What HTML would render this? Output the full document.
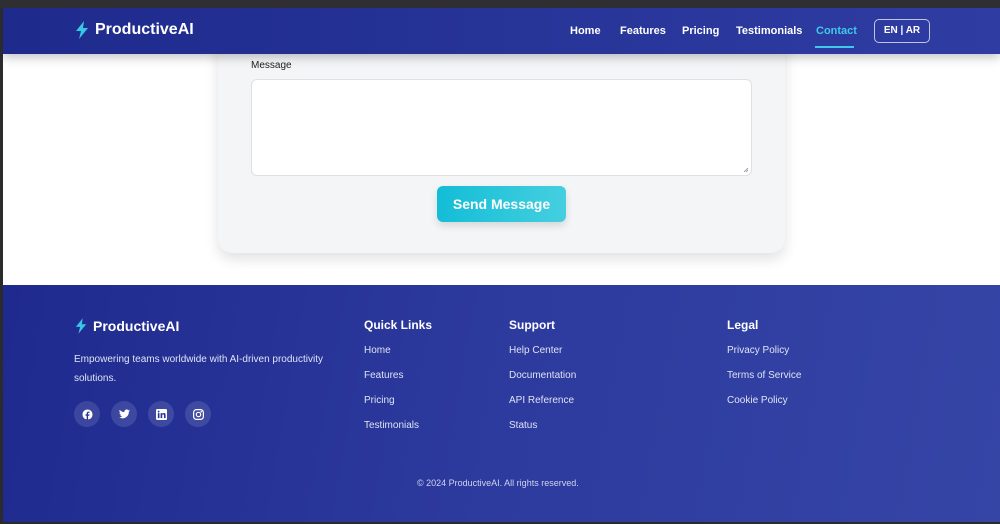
<!DOCTYPE html>
<html><head><meta charset="utf-8"><style>
*{margin:0;padding:0;box-sizing:border-box}
body{width:1000px;height:524px;overflow:hidden;background:#2b2b2e;font-family:"Liberation Sans",sans-serif;position:relative}
.top{position:absolute;left:0;top:0;width:1000px;height:8px;background:#2f2f33}
.page{position:absolute;left:3px;top:8px;width:997px;height:514px;background:#fff;overflow:hidden}
nav{position:absolute;left:0;top:0;width:100%;height:46px;background:linear-gradient(90deg,#1e2a8c,#2f3da3);box-shadow:0 3px 10px rgba(0,0,0,.25);z-index:2}
.logo{position:absolute;left:72px;top:13px;color:#fff;font-weight:bold;font-size:16px;display:flex;align-items:center;gap:6px}
.links{position:absolute;top:17px;left:0;font-size:11px;color:#fff;font-weight:bold}
.links span{position:absolute;white-space:nowrap}
.lang{position:absolute;left:871px;top:11px;width:56px;height:24px;border:1px solid rgba(255,255,255,.7);border-radius:5px;color:#fff;font-size:10px;font-weight:bold;text-align:center;line-height:22px}
.card{position:absolute;left:215px;top:20px;width:567px;height:225px;background:#f4f5f7;border-radius:14px;box-shadow:0 6px 14px rgba(0,0,0,.12)}
.lbl{position:absolute;left:248px;top:52px;font-size:10px;color:#222}
.ta{position:absolute;left:248px;top:71px;width:501px;height:97px;background:#fff;border:1px solid #dde0e4;border-radius:6px}
.btn{position:absolute;left:434px;top:178px;width:129px;height:36px;border-radius:6px;background:linear-gradient(90deg,#13bdd6,#45cfe0);color:#fff;font-size:14px;font-weight:bold;text-align:center;line-height:36px;box-shadow:0 4px 8px rgba(0,0,0,.12)}
footer{position:absolute;left:0;top:277px;width:100%;height:237px;background:linear-gradient(100deg,#1f2a8e,#2d3a9e 50%,#3545a6)}
.f{position:absolute;color:#dfe3f5;font-size:10px;white-space:nowrap}
.h{color:#fff;font-weight:bold;font-size:12px}
.soc{position:absolute;top:116px;width:26px;height:26px;border-radius:50%;background:rgba(255,255,255,.12);display:flex;align-items:center;justify-content:center}
</style></head><body>
<div class="top"></div>
<div class="page">
<div class="card"></div>
<div class="lbl">Message</div>
<div class="ta"><svg style="position:absolute;right:2px;bottom:2px" width="6" height="6"><path d="M1 5L5 1M3 5L5 3" stroke="#888" stroke-width=".8"/></svg></div>
<div class="btn">Send Message</div>
<nav>
<div class="logo"><svg width="14" height="18" viewBox="0 0 14 18"><path d="M9 0L1 10h5l-2 8 9-11H8z" fill="#38c6e6"/></svg>ProductiveAI</div>
<div class="links">
<span style="left:567px">Home</span><span style="left:617px">Features</span><span style="left:679px">Pricing</span><span style="left:733px">Testimonials</span><span style="left:813px;color:#3fc8ea">Contact</span>
<span style="left:812px;top:21px;width:39px;height:2px;background:#3fc8ea"></span>
</div>
<div class="lang">EN | AR</div>
</nav>
<footer>
<div class="logo" style="top:33px;left:72px;font-size:14px"><svg width="12" height="16" viewBox="0 0 14 18"><path d="M9 0L1 10h5l-2 8 9-11H8z" fill="#38c6e6"/></svg>ProductiveAI</div>
<div class="f" style="left:71px;top:65px;line-height:19px;white-space:normal;width:280px">Empowering teams worldwide with AI-driven productivity solutions.</div>
<div class="soc" style="left:71px"><svg width="11" height="11" viewBox="0 0 12 12"><circle cx="6" cy="6" r="5.5" fill="#fff"/><path d="M6.6 12V7.3h1.4l.2-1.5H6.6V4.9c0-.4.2-.7.7-.7h.9V2.9H7c-1.2 0-1.9.7-1.9 1.900v1H3.8v1.5h1.3V12z" fill="#2a3595"/></svg></div>
<div class="soc" style="left:108px"><svg width="11" height="10" viewBox="0 0 24 20"><path d="M24 2.4a10 10 0 01-2.8.8A5 5 0 0023.3.5a10 10 0 01-3.1 1.2A4.9 4.9 0 0011.8 6 14 14 0 011.7.9a4.9 4.9 0 001.5 6.6 4.9 4.9 0 01-2.2-.6 4.9 4.9 0 003.9 4.8 5 5 0 01-2.2.1 4.9 4.9 0 004.6 3.4A9.9 9.9 0 010 17.2 14 14 0 007.5 19.5c9.1 0 14-7.5 14-14v-.6A10 10 0 0024 2.4z" fill="#fff"/></svg></div>
<div class="soc" style="left:145px"><svg width="11" height="11" viewBox="0 0 12 12"><rect width="12" height="12" rx="1.5" fill="#fff"/><path d="M2 4.5h1.8V10H2zM2.9 1.8a1 1 0 110 2 1 1 0 010-2zM5 4.5h1.7v.8c.3-.5.9-.9 1.8-.9 1.8 0 2 1.1 2 2.6V10H8.7V7.3c0-.7 0-1.5-.9-1.5s-1 .7-1 1.4V10H5z" fill="#2a3595"/></svg></div>
<div class="soc" style="left:182px"><svg width="11" height="11" viewBox="0 0 12 12" fill="none" stroke="#fff" stroke-width="1.3"><rect x=".7" y=".7" width="10.6" height="10.6" rx="3"/><circle cx="6" cy="6" r="2.4"/><circle cx="9.1" cy="2.9" r=".3" fill="#fff"/></svg></div>
<div class="f h" style="left:361px;top:33px">Quick Links</div>
<div class="f" style="left:361px;top:60px">Home</div><div class="f" style="left:361px;top:85px">Features</div><div class="f" style="left:361px;top:110px">Pricing</div><div class="f" style="left:361px;top:135px">Testimonials</div>
<div class="f h" style="left:506px;top:33px">Support</div>
<div class="f" style="left:506px;top:60px">Help Center</div><div class="f" style="left:506px;top:85px">Documentation</div><div class="f" style="left:506px;top:110px">API Reference</div><div class="f" style="left:506px;top:135px">Status</div>
<div class="f h" style="left:724px;top:33px">Legal</div>
<div class="f" style="left:724px;top:60px">Privacy Policy</div><div class="f" style="left:724px;top:85px">Terms of Service</div><div class="f" style="left:724px;top:110px">Cookie Policy</div>
<div class="f" style="left:414px;top:193px;font-size:9px;color:#cfd4ee">© 2024 ProductiveAI. All rights reserved.</div>
</footer>
</div>
</body></html>
